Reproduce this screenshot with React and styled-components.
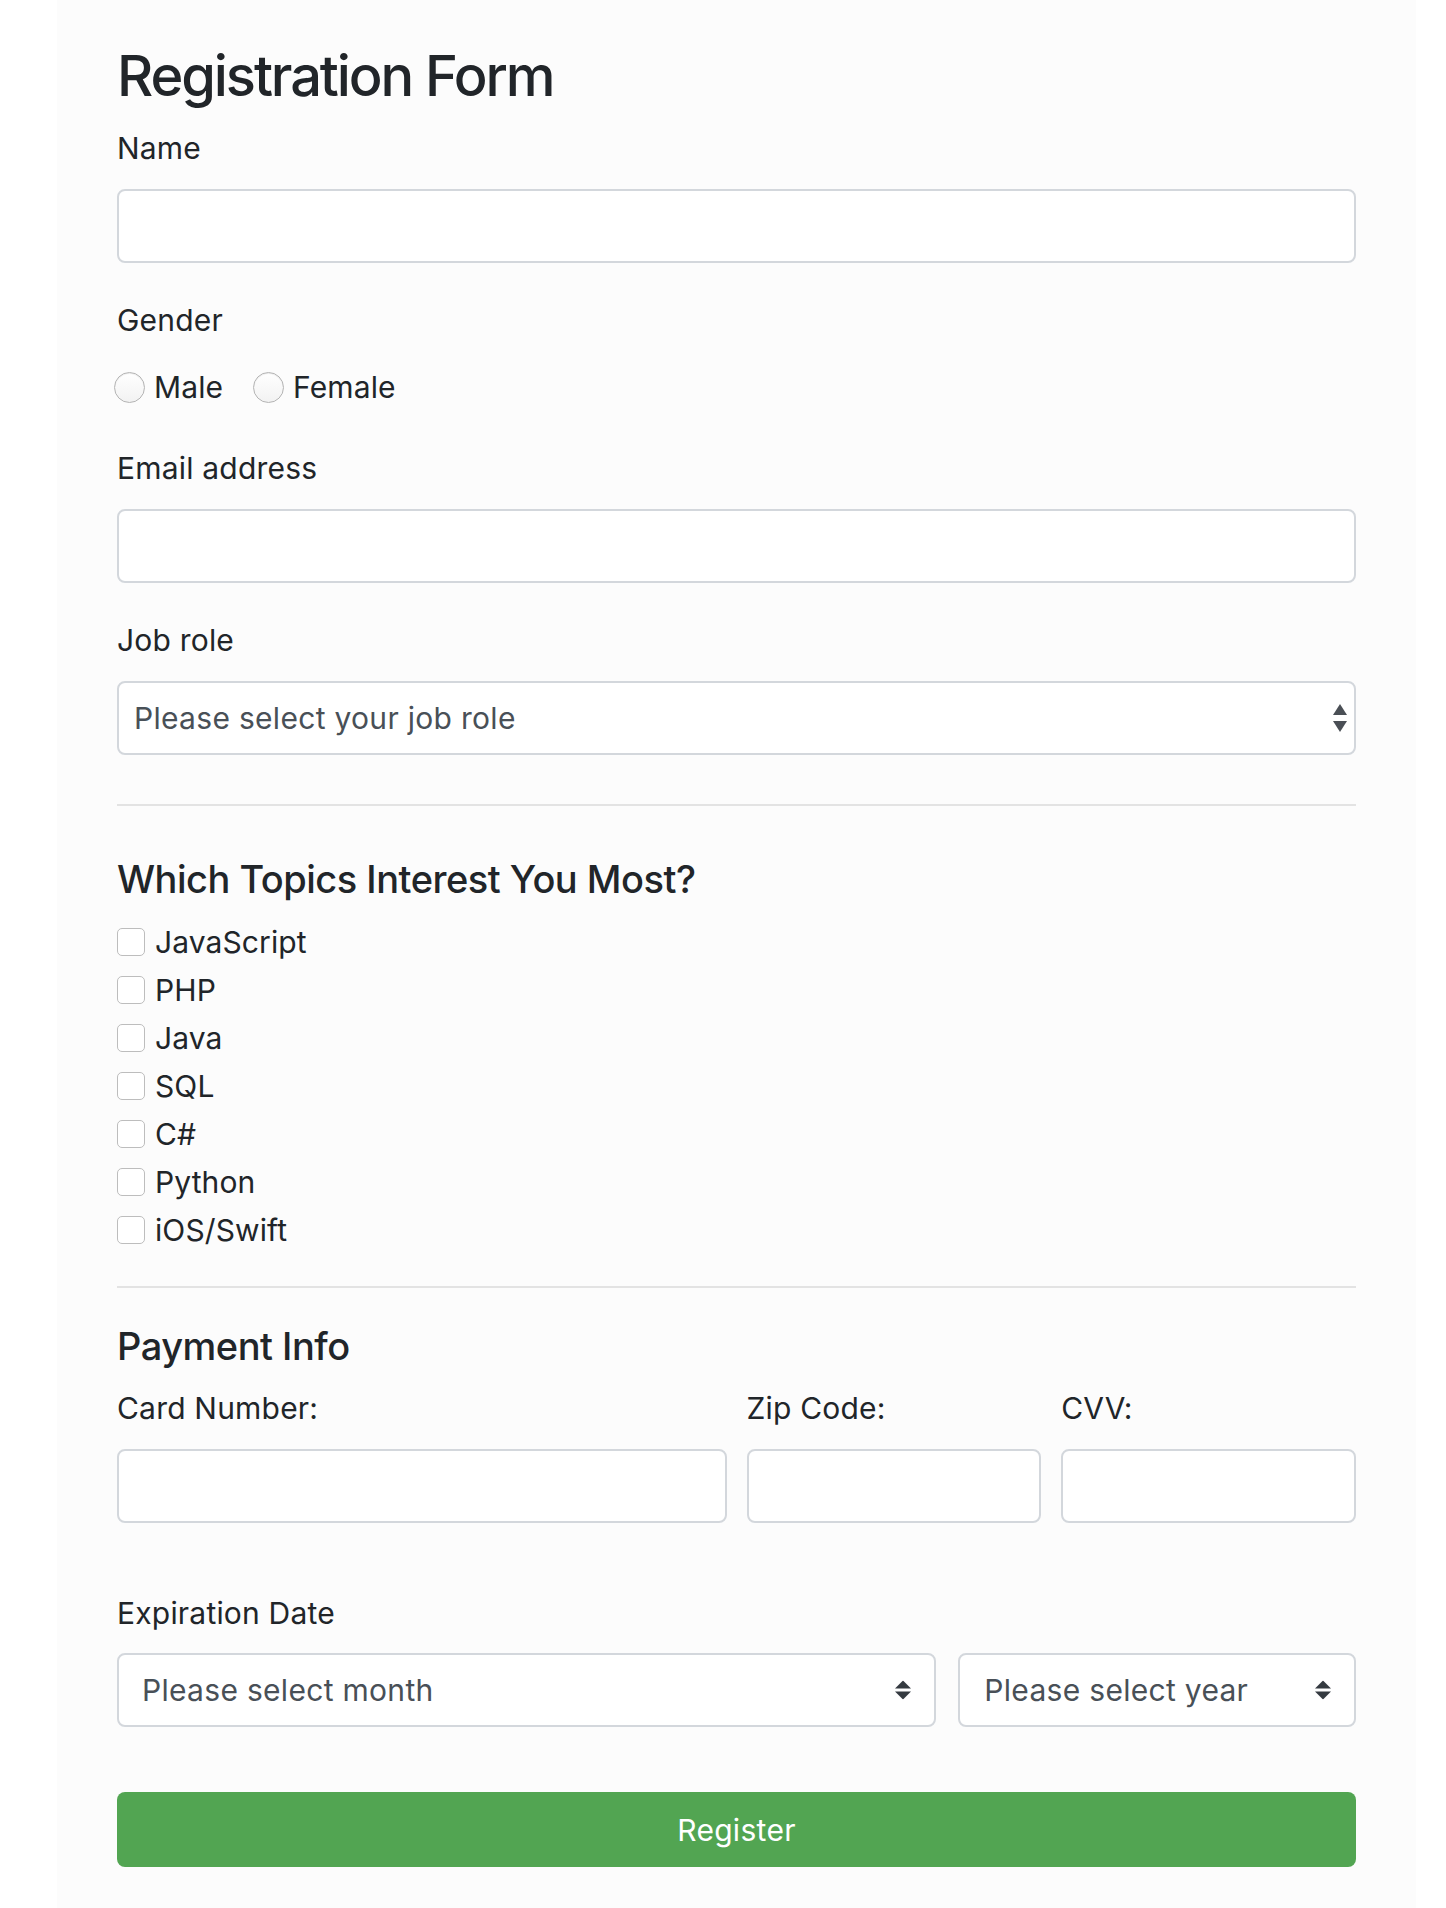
import React from 'react';
import styled, { createGlobalStyle } from 'styled-components';

const GlobalStyle = createGlobalStyle`
  * { box-sizing: border-box; }
  body {
    margin: 0;
    background: #ffffff;
    font-family: Inter, "Noto Sans", sans-serif;
    color: #212529;
  }
`;

const Page = styled.form`
  margin-left: 57px;
  width: 1359px;
  min-height: 100vh;
  padding: 43px 60px 41px;
  background: #fcfcfc;
`;

const Title = styled.h1`
  margin: 0 0 16px;
  font-size: 56px;
  line-height: 67px;
  font-weight: 500;
  letter-spacing: -2.1px;
`;

const SectionTitle = styled.h3`
  margin: 0 0 ${(p) => p.$mb || 15}px;
  font-size: 38px;
  line-height: 47px;
  font-weight: 500;
  letter-spacing: -0.5px;
`;

const Field = styled.div`
  margin-bottom: ${(p) => p.$mb || 35}px;
`;

const Label = styled.label`
  display: block;
  margin-bottom: ${(p) => p.$mb || 18}px;
  font-size: 30px;
  line-height: 45px;
  letter-spacing: 0.2px;
`;

const TextInput = styled.input`
  display: block;
  width: 100%;
  height: 74px;
  padding: 0 15px;
  border: 2px solid #d3d7dc;
  border-radius: 8px;
  background: #ffffff;
  font: inherit;
  font-size: 30px;
  color: #495057;
  outline: none;
`;

const SelectWrap = styled.div`
  position: relative;
`;

const Select = styled.select`
  display: block;
  width: 100%;
  height: 74px;
  padding: 0 50px 0 ${(p) => p.$pad || 15}px;
  border: 2px solid #d3d7dc;
  border-radius: 8px;
  background: #ffffff;
  font-family: inherit;
  font-size: 30px;
  letter-spacing: 0.3px;
  color: #495057;
  appearance: none;
  -webkit-appearance: none;
  outline: none;
`;

const Arrows = styled.svg`
  position: absolute;
  top: 50%;
  right: ${(p) => p.$right}px;
  transform: translateY(-50%);
  pointer-events: none;
`;

const RadioRow = styled.div`
  display: flex;
  align-items: center;
  gap: 30px;
  height: 45px;
  margin-left: -3px;
`;

const Option = styled.label`
  display: flex;
  align-items: center;
  gap: ${(p) => p.$gap || 9}px;
  font-size: 30px;
  line-height: ${(p) => p.$lh || 45}px;
  letter-spacing: 0.1px;
`;

const Radio = styled.input.attrs({ type: 'radio' })`
  appearance: none;
  -webkit-appearance: none;
  margin: 0;
  width: 31px;
  height: 31px;
  border-radius: 50%;
  border: 1px solid #b4b4b4;
  background: linear-gradient(#ffffff, #f2f2f2);
  box-shadow: inset 0 1px 1px rgba(0, 0, 0, 0.08);
`;

const CheckList = styled.div`
  display: flex;
  flex-direction: column;
  margin-bottom: 32px;
`;

const Checkbox = styled.input.attrs({ type: 'checkbox' })`
  appearance: none;
  -webkit-appearance: none;
  margin: 0;
  width: 28px;
  height: 28px;
  border-radius: 5px;
  border: 1.5px solid #bdbdbd;
  background: #ffffff;
`;

const Divider = styled.hr`
  margin: 0 0 ${(p) => p.$mb}px;
  border: 0;
  height: 2px;
  background: #e3e3e3;
`;

const PayRow = styled.div`
  display: grid;
  grid-template-columns: calc((100% + 20px) / 2 - 20px) 1fr 1fr;
  gap: 20px;
  margin-bottom: 68px;
`;

const ExpiryRow = styled.div`
  display: grid;
  grid-template-columns: calc((100% + 20px) * 2 / 3 - 20px) 1fr;
  gap: 22px;
`;

const Button = styled.button`
  display: block;
  width: 100%;
  height: 75px;
  border: 0;
  border-radius: 8px;
  background: #52a552;
  color: #ffffff;
  font-family: inherit;
  font-size: 30px;
  letter-spacing: 0.3px;
  cursor: pointer;
`;

const NativeArrows = () => (
  <Arrows $right={9} width="14" height="28" viewBox="0 0 14 28">
    <polygon points="0,11 7,0 14,11" fill="#4a4f55" />
    <polygon points="0,17 14,17 7,28" fill="#4a4f55" />
  </Arrows>
);

const CustomArrows = () => (
  <Arrows $right={25} width="16" height="19" viewBox="0 0 16 19">
    <polygon points="0,8 8,0 16,8" fill="#343a40" />
    <polygon points="0,11 16,11 8,19" fill="#343a40" />
  </Arrows>
);

const topics = ['JavaScript', 'PHP', 'Java', 'SQL', 'C#', 'Python', 'iOS/Swift'];

export default function App() {
  return (
    <>
      <GlobalStyle />
      <Page onSubmit={(e) => e.preventDefault()}>
        <Title>Registration Form</Title>

        <Field>
          <Label>Name</Label>
          <TextInput type="text" />
        </Field>

        <Field $mb={36}>
          <Label $mb={22}>Gender</Label>
          <RadioRow>
            <Option><Radio name="gender" />Male</Option>
            <Option><Radio name="gender" />Female</Option>
          </RadioRow>
        </Field>

        <Field>
          <Label>Email address</Label>
          <TextInput type="email" />
        </Field>

        <Field $mb={49}>
          <Label>Job role</Label>
          <SelectWrap>
            <Select defaultValue="">
              <option value="">Please select your job role</option>
            </Select>
            <NativeArrows />
          </SelectWrap>
        </Field>

        <Divider $mb={50} />

        <SectionTitle>Which Topics Interest You Most?</SectionTitle>
        <CheckList>
          {topics.map((t) => (
            <Option key={t} $gap={10} $lh={48}>
              <Checkbox />
              {t}
            </Option>
          ))}
        </CheckList>

        <Divider $mb={35} />

        <SectionTitle $mb={16}>Payment Info</SectionTitle>
        <PayRow>
          <div>
            <Label>Card Number:</Label>
            <TextInput type="text" />
          </div>
          <div>
            <Label>Zip Code:</Label>
            <TextInput type="text" />
          </div>
          <div>
            <Label>CVV:</Label>
            <TextInput type="text" />
          </div>
        </PayRow>

        <Field $mb={65}>
          <Label $mb={17}>Expiration Date</Label>
          <ExpiryRow>
            <SelectWrap>
              <Select $pad={23} defaultValue="">
                <option value="">Please select month</option>
              </Select>
              <CustomArrows />
            </SelectWrap>
            <SelectWrap>
              <Select $pad={24} defaultValue="">
                <option value="">Please select year</option>
              </Select>
              <CustomArrows />
            </SelectWrap>
          </ExpiryRow>
        </Field>

        <Button type="submit">Register</Button>
      </Page>
    </>
  );
}
